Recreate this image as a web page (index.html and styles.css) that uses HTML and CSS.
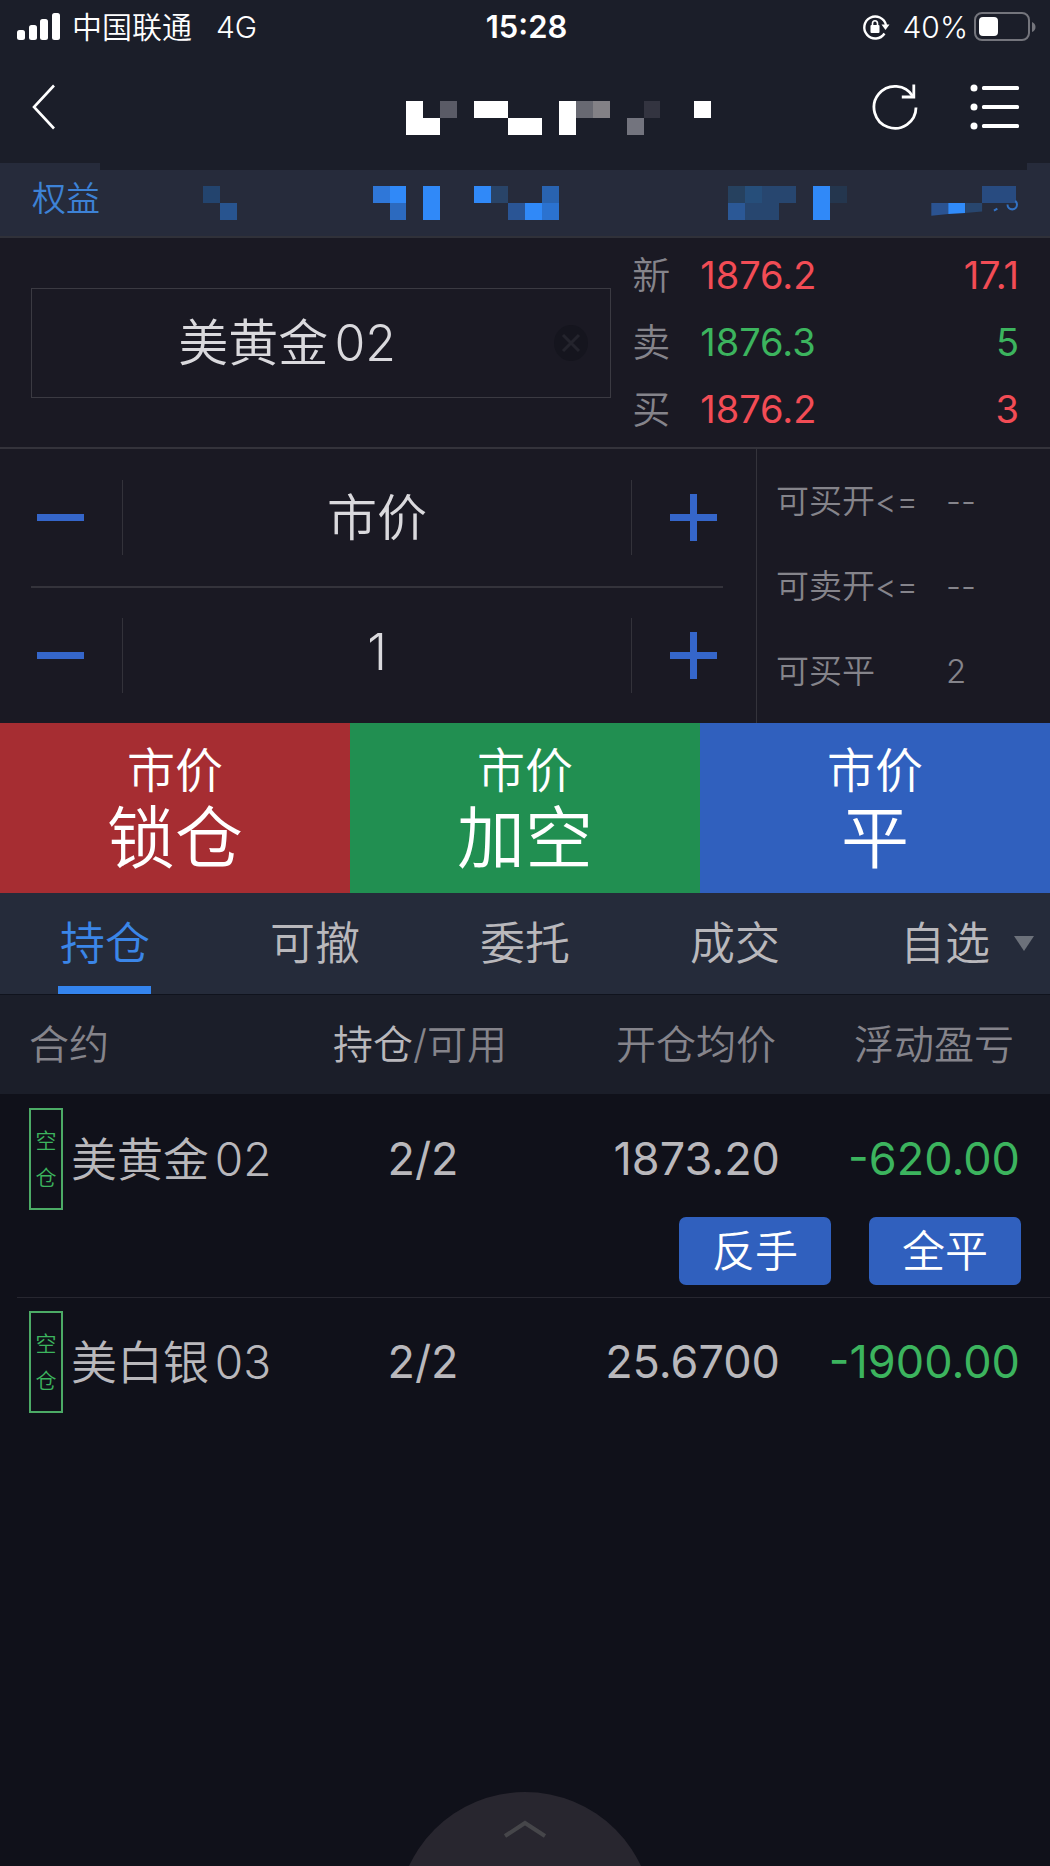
FILE: index.html
```html
<!DOCTYPE html>
<html lang="zh-CN">
<head>
  <meta charset="UTF-8" />
  <meta name="viewport" content="width=device-width, initial-scale=1" />
  <title>交易</title>
  <link rel="stylesheet" href="styles.css">
</head>
<body>

<header class="top">
  <div class="status">
    <div class="status-left">
      <svg class="signal" width="44" height="28" viewBox="0 0 44 28" fill="#fff">
        <rect x="0" y="17" width="8" height="10" rx="2.5" />
        <rect x="12" y="12" width="8" height="15" rx="2.5" />
        <rect x="23" y="6" width="8" height="21" rx="2.5" />
        <rect x="35" y="0" width="8" height="27" rx="2.5" />
      </svg>
      <span class="carrier">中国联通</span>
      <span>4G</span>
    </div>
    <span class="clock">15:28</span>
    <div class="status-right">
      <svg width="28" height="28" viewBox="0 0 28 28" fill="none" stroke="#fff" stroke-width="2.4">
        <path d="M22.5 20.5A11 11 0 1 1 24 12" />
        <path d="M19.5 11.5h8l-4 5.5z" fill="#fff" stroke="none" />
        <rect x="8.5" y="12" width="9" height="8" rx="1" fill="#fff" stroke="none" />
        <path d="M10.5 12.5v-2a2.5 2.7 0 0 1 5 0v2" stroke-width="1.6" />
      </svg>
      <span class="percent">40%</span>
      <svg width="62" height="30" viewBox="0 0 62 30">
        <rect x="1" y="1" width="54" height="27" rx="7" fill="none" stroke="#74757c" stroke-width="2" />
        <rect x="5" y="5" width="19" height="19" rx="4" fill="#fff" />
        <path d="M58 10q3.5 1.5 3.5 5t-3.5 5z" fill="#74757c" />
      </svg>
    </div>
  </div>

  <nav class="nav">
    <button class="icon-btn" aria-label="返回">
      <svg width="24" height="46" viewBox="0 0 24 46" fill="none" stroke="#fff" stroke-width="2.6">
        <path d="M22 1.5L2 23l20 21.5" />
      </svg>
    </button>
    <div class="nav-right">
      <button class="icon-btn" aria-label="刷新">
        <svg width="46" height="48" viewBox="0 0 46 48" fill="none" stroke="#fff" stroke-width="2.8">
          <path d="M44 24.5A21 21 0 1 1 41 13.5" />
          <path d="M41.8 1.5v12.5h-12" />
        </svg>
      </button>
      <button class="icon-btn" aria-label="菜单">
        <svg width="50" height="46" viewBox="0 0 50 46" fill="#fff">
          <circle cx="4" cy="4" r="3.5" /><rect x="12" y="2" width="37" height="4" rx="1.5" />
          <circle cx="4" cy="23" r="3.5" /><rect x="12" y="21" width="37" height="4" rx="1.5" />
          <circle cx="4" cy="42" r="3.5" /><rect x="12" y="40" width="37" height="4" rx="1.5" />
        </svg>
      </button>
    </div>
    <!-- masked account name -->
    <svg class="mask mask-title" viewBox="0 0 62 2" shape-rendering="crispEdges" fill="#fff">
      <path d="M24 0h1v1h1v1h-2zM28 0h2v1h2v1h-2v-1h-2zM33 0h1v2h-1zM41 0h1v1h-1z" />
      <path d="M26 0h1v1h-1z" fill="#5a5b66" />
      <path d="M34 0h1v1h-1z" fill="#686972" />
      <path d="M35 0h1v1h-1z" fill="#838186" />
      <path d="M37 1h1v1h-1z" fill="#73747e" />
      <path d="M38 0h1v1h-1z" fill="#333440" />
    </svg>
  </nav>
</header>

<section class="account">
  <span class="account-label">权益</span>
  <div class="account-notch"></div>
  <!-- masked balance figures -->
  <svg class="mask mask-account" viewBox="0 0 62 2">
    <g shape-rendering="crispEdges">
      <path d="M12 0h1v1h-1z" fill="#23446e" />
      <path d="M13 1h1v1h-1z" fill="#28548f" />
      <path d="M22 0h1v1h-1z" fill="#2f77d8" />
      <path d="M23 0h1v1h-1zM25 0h1v2h-1zM28 0h1v1h-1zM31 1h1v1h-1zM48 0h1v2h-1z" fill="#3089f8" />
      <path d="M23 1h1v1h-1z" fill="#2c6abf" />
      <path d="M29 0h1v1h-1z" fill="#294468" />
      <path d="M30 1h1v1h-1z" fill="#2a5595" />
      <path d="M32 0h1v1h-1z" fill="#2963b0" />
      <path d="M32 1h1v1h-1z" fill="#2b72d0" />
      <path d="M43 0h1v1h-1z" fill="#26415f" />
      <path d="M44 0h1v1h-1z" fill="#264e7a" />
      <path d="M45 0h2v1h-2zM44 1h2v1h-2z" fill="#27466f" />
      <path d="M43 1h1v1h-1z" fill="#2b5896" />
      <path d="M49 0h1v1h-1z" fill="#24364e" />
      <path d="M58 0h2v1h-2z" fill="#284b80" />
    </g>
    <path d="M55 1h1v.65l-1 .1z" fill="#2b5391" />
    <path d="M56 1h1v.6l-1 .05z" fill="#308bfa" />
    <path d="M57 1h1v.5l-1 .1z" fill="#28466e" />
    <path d="M59.5 1.1a.28 .28 0 0 0 .56 0q0-.15-.1-.22M58.7 1.45l.2-.12" fill="none" stroke="#3272c4" stroke-width=".12" />
  </svg>
</section>

<section class="quote">
  <div class="contract">
    <input class="contract-input" type="text" value="美黄金02" aria-label="合约" />
    <button class="clear" aria-label="清除">
      <svg width="34" height="36" viewBox="0 0 34 36">
        <ellipse cx="17" cy="18" rx="17" ry="18" fill="#15151e" />
        <path d="M9 10l16 16M25 10L9 26" stroke="#24242d" stroke-width="3" />
      </svg>
    </button>
  </div>
  <div class="prices">
    <span class="dim">新</span><span class="red">1876.2</span><span class="red num">17.1</span>
    <span class="dim">卖</span><span class="green">1876.3</span><span class="green num">5</span>
    <span class="dim">买</span><span class="red">1876.2</span><span class="red num">3</span>
  </div>
</section>

<section class="order">
  <div class="steppers">
    <div class="stepper">
      <button class="step minus" aria-label="减价"></button>
      <input type="text" value="市价" aria-label="价格" />
      <button class="step plus" aria-label="加价"></button>
    </div>
    <div class="stepper">
      <button class="step minus" aria-label="减少手数"></button>
      <input type="text" value="1" aria-label="手数" />
      <button class="step plus" aria-label="增加手数"></button>
    </div>
  </div>
  <div class="limits">
    <span>可买开&lt;=</span><span>--</span>
    <span>可卖开&lt;=</span><span>--</span>
    <span>可买平</span><span>2</span>
  </div>
</section>

<section class="actions">
  <button class="action lock"><span>市价</span><strong>锁仓</strong></button>
  <button class="action add"><span>市价</span><strong>加空</strong></button>
  <button class="action close"><span>市价</span><strong>平</strong></button>
</section>

<div class="tabs">
  <button class="tab active">持仓</button>
  <button class="tab">可撤</button>
  <button class="tab">委托</button>
  <button class="tab">成交</button>
  <button class="tab more">自选</button>
</div>

<table class="positions">
  <thead>
    <tr>
      <th class="col-name">合约</th>
      <th class="col-qty"><b>持仓</b>/可用</th>
      <th class="col-price">开仓均价</th>
      <th class="col-pnl">浮动盈亏</th>
    </tr>
  </thead>
  <tbody>
    <tr>
      <td><div class="name"><span class="side"><i>空</i><i>仓</i></span><span>美黄金02</span></div></td>
      <td class="col-qty">2/2</td>
      <td class="col-price">1873.20</td>
      <td class="col-pnl green">-620.00</td>
    </tr>
    <tr class="row-buttons">
      <td colspan="4">
        <div class="buttons">
          <button class="small-btn">反手</button>
          <button class="small-btn">全平</button>
        </div>
      </td>
    </tr>
    <tr class="divided">
      <td><div class="name"><span class="side"><i>空</i><i>仓</i></span><span>美白银03</span></div></td>
      <td class="col-qty">2/2</td>
      <td class="col-price">25.6700</td>
      <td class="col-pnl green">-1900.00</td>
    </tr>
  </tbody>
</table>

<button class="drawer" aria-label="展开">
  <svg width="256" height="74" viewBox="0 0 256 74">
    <circle cx="128" cy="128" r="128" fill="#28262f" />
    <path d="M108 44l20-13 20 13" fill="none" stroke="#46464a" stroke-width="4" />
  </svg>
</button>

</body>
</html>
```
FILE: styles.css
```css
* {
  box-sizing: border-box;
}

body {
  margin: 0;
  min-height: 100vh;
  display: flex;
  flex-direction: column;
  background: #10111a;
  color: #b9b8bc;
  font-family: Inter, "Noto Sans CJK SC", sans-serif;
  font-weight: 350;
  text-autospace: normal;
}

button,
input {
  margin: 0;
  padding: 0;
  border: none;
  border-radius: 0;
  background: none;
  color: inherit;
  font: inherit;
}

svg {
  display: block;
}

.red {
  color: #f24c55;
  font-weight: 400;
}

.green {
  color: #3cb45e;
  font-weight: 400;
}

.dim {
  color: #85848b;
}

/* status bar + navigation */
.top {
  background: #1b1e29;
  color: #fff;
}

.status {
  display: grid;
  grid-template-columns: 1fr auto 1fr;
  align-items: center;
  height: 54px;
  padding: 0 14px 0 17px;
  font-size: 30px;
  line-height: 36px;
}

.status-left,
.status-right {
  display: flex;
  align-items: center;
}

.status-left {
  gap: 24px;
}

.status-right {
  justify-content: flex-end;
  gap: 6px;
}

.carrier {
  margin-left: -13px;
}

.percent {
  margin-left: 6px;
}

.clock {
  font-size: 31px;
  font-weight: 600;
}

.nav {
  position: relative;
  display: flex;
  justify-content: space-between;
  align-items: center;
  height: 109px;
  padding: 0 30px 4px 32px;
}

.nav-right {
  display: flex;
  gap: 52px;
}

/* pixelated covers drawn over the text */
.mask {
  position: absolute;
  left: 0;
  width: 100%;
}

.mask-title {
  top: 47px;
}

.mask-account {
  top: 23px;
}

.account {
  position: relative;
  height: 75px;
  padding: 0 32px;
  background: #262b3b;
  border-bottom: 2px solid #303139;
  color: #3d82d6;
  font-size: 34px;
  line-height: 71px;
}

.account-notch {
  position: absolute;
  top: 0;
  left: 100px;
  right: 23px;
  height: 7px;
  background: #1b1e29;
}

/* contract and quotes */
.quote {
  display: grid;
  grid-template-columns: minmax(0, 3fr) minmax(0, 2fr);
  gap: 21px;
  align-items: center;
  height: 211px;
  padding: 0 31px;
  background: #1a1923;
  border-bottom: 2px solid #34333b;
}

.contract {
  display: flex;
  align-items: center;
  height: 110px;
  padding-right: 22px;
  border: 1px solid #3b3a42;
}

.contract-input {
  flex: 1;
  min-width: 0;
  height: 100%;
  padding: 0 12px 8px 0;
  color: #dad9dd;
  font-size: 50px;
  text-align: center;
}

.prices {
  display: grid;
  grid-template-columns: 68px 1fr auto;
  font-size: 38px;
  line-height: 67px;
}

.num {
  text-align: right;
}

/* order form */
.order {
  display: grid;
  grid-template-columns: minmax(0, 1fr) 28%;
  background: #1a1923;
}

.steppers {
  padding: 0 33px 0 31px;
}

.stepper {
  display: flex;
  align-items: center;
  height: 137px;
}

.stepper + .stepper {
  border-top: 2px solid #34333b;
}

.stepper input {
  flex: 1;
  min-width: 0;
  height: 75px;
  padding-bottom: 8px;
  border: solid #33323a;
  border-width: 0 1px;
  color: #dad9dd;
  font-size: 50px;
  text-align: center;
}

.step {
  flex: none;
  width: 91px;
  height: 75px;
  background: linear-gradient(#3566ca, #3566ca) no-repeat 6px center / 47px 7px;
}

.plus {
  background:
    linear-gradient(#3566ca, #3566ca) no-repeat right 6px center / 47px 7px,
    linear-gradient(#3566ca, #3566ca) no-repeat right 26px center / 7px 47px;
}

.limits {
  display: grid;
  grid-template-columns: 170px 1fr;
  align-content: center;
  padding-left: 19px;
  border-left: 1px solid #34333b;
  color: #85848b;
  font-size: 33px;
  line-height: 85px;
}

.actions {
  display: grid;
  grid-template-columns: repeat(3, 1fr);
}

.action {
  display: flex;
  flex-direction: column;
  align-items: center;
  height: 170px;
  padding-top: 14px;
  color: #fff;
}

.action span {
  font-size: 48px;
  line-height: 67px;
}

.action strong {
  font-size: 68px;
  line-height: 68px;
  font-weight: inherit;
}

.lock {
  background: #a62d32;
}

.add {
  background: #218f51;
}

.close {
  background: #3060be;
}

/* tabs */
.tabs {
  display: grid;
  grid-template-columns: repeat(5, 1fr);
  height: 102px;
  background: #252b3a;
  border-bottom: 1px solid #10131d;
}

.tab {
  position: relative;
  font-size: 45px;
  line-height: 100px;
}

.active {
  color: #3b86e8;
}

.active::after {
  content: "";
  position: absolute;
  bottom: 0;
  left: 50%;
  width: 93px;
  height: 8px;
  margin-left: -47px;
  background: #3484ee;
}

.more::after {
  content: "";
  position: absolute;
  right: 16px;
  top: 43px;
  border: solid transparent;
  border-width: 15px 10px 0;
  border-top-color: #6c717a;
}

/* positions */
.positions {
  width: 100%;
  table-layout: fixed;
  border-collapse: collapse;
  font-size: 45px;
  line-height: 54px;
}

.positions th {
  height: 99px;
  padding: 0;
  background: #1b1e29;
  color: #85848b;
  font-size: 40px;
  font-weight: inherit;
}

.positions th b {
  color: #b9b8bc;
  font-weight: inherit;
}

.positions td {
  padding: 0;
}

.positions .col-name {
  width: 27%;
  padding-left: 29px;
  text-align: left;
}

.positions .col-qty {
  width: 26%;
  text-align: center;
}

.positions td.col-qty {
  padding-left: 6px;
  font-weight: 400;
}

.positions .col-price {
  width: 23%;
  padding-right: 18px;
  text-align: right;
}

.positions td.col-price {
  font-weight: 400;
}

.positions .col-pnl {
  padding-right: 30px;
  text-align: right;
}

.positions th.col-price {
  padding-right: 22px;
}

.positions th.col-pnl {
  padding-right: 36px;
}

.name {
  display: flex;
  align-items: center;
  gap: 8px;
  height: 130px;
  padding-left: 29px;
  font-size: 46px;
  white-space: nowrap;
}

.side {
  display: flex;
  flex-direction: column;
  align-items: center;
  justify-content: center;
  width: 34px;
  height: 102px;
  border: 2px solid #4cab66;
  color: #3cb45e;
  font-size: 21px;
  line-height: 37px;
}

.side i {
  font-style: normal;
}

.buttons {
  display: flex;
  justify-content: flex-end;
  gap: 38px;
  height: 80px;
  padding-right: 29px;
  margin-top: -7px;
}

.small-btn {
  width: 152px;
  height: 68px;
  border-radius: 7px;
  background: #3060be;
  color: #fff;
  font-size: 43px;
  line-height: 68px;
}

.divided {
  background: linear-gradient(#272730, #272730) no-repeat 17px 0 / 100% 1px;
}

/* half-hidden drawer handle */
.drawer {
  margin: auto auto 0;
}
```
